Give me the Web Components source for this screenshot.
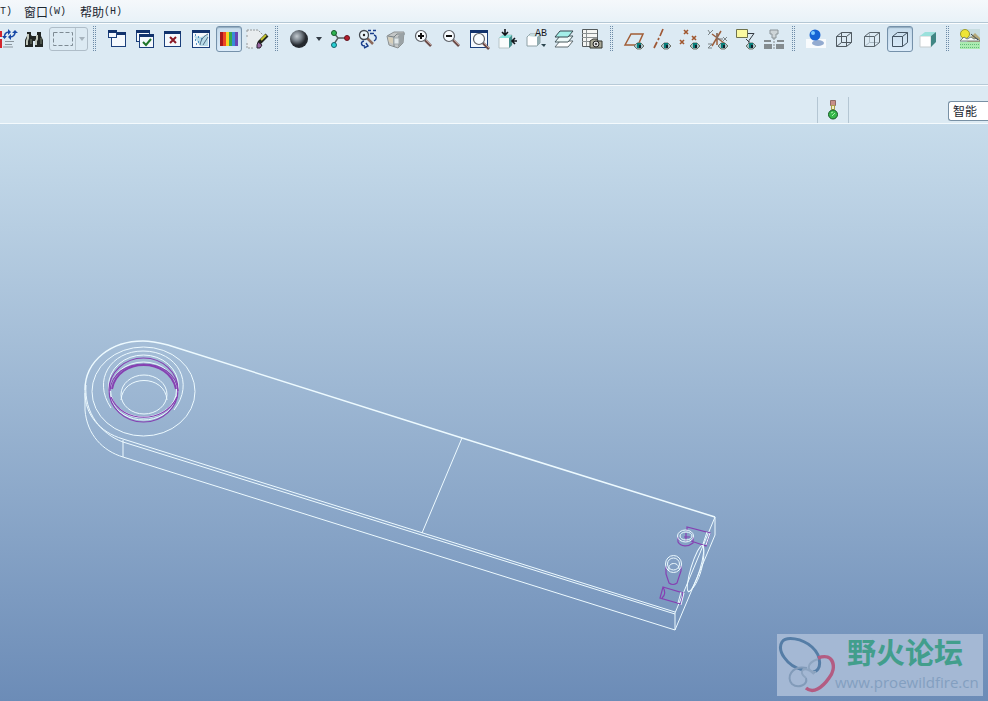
<!DOCTYPE html>
<html lang="zh-CN">
<head>
<meta charset="utf-8">
<title>零件窗口</title>
<style>
html,body{height:100%;margin:0}
body{font:12px/16px "Liberation Sans","Noto Sans CJK SC",sans-serif;color:#1c2731;overflow:hidden}
</style>
</head>
<body>
<cad-app>
  <cad-menubar slot="menu">
    <menu-item key="T" partial></menu-item>
    <menu-item key="W">窗口</menu-item>
    <menu-item key="H">帮助</menu-item>
  </cad-menubar>
  <cad-toolbar slot="tools">
    <tool-button icon="regen" label="再生" narrow></tool-button>
    <tool-button icon="find" label="查找"></tool-button>
    <select-mode></select-mode>
    <tool-grip></tool-grip>
    <tool-button icon="newwin" label="新建窗口"></tool-button>
    <tool-button icon="activate" label="激活窗口"></tool-button>
    <tool-button icon="closewin" label="关闭窗口"></tool-button>
    <tool-button icon="editwin" label="编辑窗口"></tool-button>
    <tool-button icon="spectrum" label="颜色" pressed></tool-button>
    <tool-button icon="repaint" label="重画"></tool-button>
    <tool-grip></tool-grip>
    <tool-button icon="sphere" label="外观库"></tool-button>
    <tool-button icon="arrow" label="外观菜单" menu></tool-button>
    <tool-button icon="spin" label="旋转中心"></tool-button>
    <tool-button icon="orient" label="定向模式"></tool-button>
    <tool-button icon="shade" label="视图管理"></tool-button>
    <tool-button icon="zoomin" label="放大"></tool-button>
    <tool-button icon="zoomout" label="缩小"></tool-button>
    <tool-button icon="refit" label="重新调整"></tool-button>
    <tool-button icon="reorient" label="重定向"></tool-button>
    <tool-button icon="saved" label="已保存视图"></tool-button>
    <tool-button icon="layers" label="图层"></tool-button>
    <tool-button icon="viewmgr" label="视图管理器"></tool-button>
    <tool-grip></tool-grip>
    <tool-button icon="plane" label="基准平面"></tool-button>
    <tool-button icon="axis" label="基准轴"></tool-button>
    <tool-button icon="points" label="基准点"></tool-button>
    <tool-button icon="csys" label="坐标系"></tool-button>
    <tool-button icon="note" label="注释"></tool-button>
    <tool-button icon="fastener" label="紧固件"></tool-button>
    <tool-grip></tool-grip>
    <tool-button icon="ball" label="真实感"></tool-button>
    <tool-button icon="wire" label="线框"></tool-button>
    <tool-button icon="hidden" label="隐藏线"></tool-button>
    <tool-button icon="nohidden" label="消隐" pressed></tool-button>
    <tool-button icon="shaded" label="着色"></tool-button>
    <tool-grip></tool-grip>
    <tool-button icon="scene" label="场景"></tool-button>
  </cad-toolbar>
  <cad-filterbar slot="filter"></cad-filterbar>
  <cad-viewport slot="view">
    <site-badge>
      <span slot="name">野火论坛</span>
      <a slot="url" href="#">www.proewildfire.cn</a>
    </site-badge>
  </cad-viewport>
</cad-app>

<script>
const eye = (x, y) => `<g transform="translate(${x} ${y})"><path d="M-5 0L-2 -3H2L5 0L2 3H-2Z" fill="#a9c3c6" stroke="#6f746b"/><rect x="-2" y="-3" width="4" height="5" fill="#087c78"/><rect x="0" y="-1" width="2" height="3" fill="#10202c"/></g>`;
const win = (x, y, w, h) => `<rect x="${x + .5}" y="${y + .5}" width="${w - 1}" height="${h - 1}" fill="#f5f9fd" stroke="#1b3f7b"/><rect x="${x}" y="${y}" width="${w}" height="3" fill="#12336d"/>`;
const glass = (x, y, mark) => `<path d="M${x + 4} ${y + 4}L${x + 10} ${y + 10}" stroke="#6a4c48" stroke-width="2.600"/><path d="M${x + 5} ${y + 4}L${x + 10} ${y + 9}" stroke="#c29c94"/><circle cx="${x}" cy="${y}" r="5.5" fill="#f8fcff" stroke="#5b5f65" stroke-width="1.2"/>${mark}`;
const cross = (x, y) => `<path d="M${x - 2} ${y - 2}L${x + 2} ${y + 2}M${x + 2} ${y - 2}L${x - 2} ${y + 2}" stroke="#a0562d" stroke-width="1.6"/>`;

const ICONS = {
  regen: `<path d="M0 2h2v6H0zM0 10h2v9H0z" fill="#d2242b"/><path d="M4.500 9C4 5 6 3 9 3M15 2C15.500 6 13 8 10 8" fill="none" stroke="#1748a5" stroke-width="1.500"/><path d="M2 7h5l-2.500 3zM8 0l3 3-3 3zM12 4h6L15 1zM11 5v6L8 8z" fill="#1748a5"/><path d="M5 12.500h9M5 15.500h7M3 18h10" stroke="#8b969e"/>`,
  find: `<path d="M3 3h4v3l2 2v10H1v-7l2-4zM13 3h4v4l2 4v7h-8V8l2-2zM8 7h4v5H8z" fill="#222725"/><path d="M4 5v4L3 12v4M13 6v4l-1 2v4" stroke="#c2c8bd" stroke-width="2" fill="none"/><path d="M7 10v5M17 9v6" stroke="#77816f"/>`,
  newwin: win(4, 3, 15, 15) + win(1, 1, 9, 8),
  activate: win(1, 1, 14, 12) + win(4, 5, 15, 14) + `<path d="M8 13l3 3 5-6" stroke="#207629" stroke-width="2" fill="none"/>`,
  closewin: win(1, 2, 17, 16) + `<path d="M7 8l6 6M13 8l-6 6" stroke="#8b1925" stroke-width="2"/>`,
  editwin: win(1, 1, 18, 18) + `<path d="M3 7l7 1 7-3v12H9z" fill="#b9dbe8"/><path d="M4 6h1M7 8h1M10 10h1M4 11h1M7 13h1M5 15h1" stroke="#2876b2" stroke-width="1.500"/><path d="M9 16c1-6 4-9 8-11M12 16l5-8" stroke="#547087" fill="none"/>`,
  spectrum: `<path d="M1 3h4v14H1z" fill="#a9161c"/><path d="M4 3h3v14H4z" fill="#ee4524"/><path d="M7 3h3v14H7z" fill="#f6d323"/><path d="M10 3h3v14h-3z" fill="#35a94c"/><path d="M13 3h3v14h-3z" fill="#398bd8"/><path d="M16 3h3v14h-3z" fill="#6847b2"/>`,
  repaint: `<path d="M0 1h11l6 5-10 13H0z" fill="#e9edef"/><path d="M0 1h11l5 5M0 1v3M0 6v3M0 14v5h6" fill="none" stroke="#969a9b" stroke-dasharray="2 1"/><path d="M12 14l8-8" stroke="#20241b" stroke-width="4"/><path d="M14 11l5-5" stroke="#c4c62f" stroke-width="2"/><path d="M11 13l4 3-2 3h-3v-3z" fill="#9c65a2" stroke="#29232e"/>`,
  sphere: `<defs><radialGradient id="g" cx=".38" cy=".35"><stop stop-color="#c3cad0"/><stop offset=".5" stop-color="#7b848c"/><stop offset="1" stop-color="#25292e"/></radialGradient></defs><circle cx="10" cy="10" r="9" fill="url(#g)"/>`,
  arrow: `<path d="M3 8h6l-3 4z" fill="#333c45"/>`,
  spin: `<path d="M4 4l4 5-4 6M8 9h8" stroke="#555c5d" stroke-width="1.400" fill="none"/><circle cx="4" cy="4" r="2.500" fill="#30b451" stroke="#17592a"/><circle cx="17" cy="9" r="2.500" fill="#b51e2b" stroke="#641620"/><circle cx="4" cy="16" r="2.500" fill="#29d0d4" stroke="#15636c"/>`,
  orient: `<path d="M10 1.500h3M15 1.500h3M12 4.500h4M16 6c3 1 3 4 0 6M6 12c-4 1-3 5 1 5M6 19l4-2-2-3" stroke="#183d8b" stroke-width="1.400" fill="none"/><path d="M9 9l6 6" stroke="#8c6a5c" stroke-width="2.500"/><circle cx="6" cy="6" r="4.500" fill="#eaf5fa" stroke="#444b52" stroke-width="1.300"/><circle cx="6" cy="6" r="1.200" fill="#222"/>`,
  shade: `<path d="M1 7l7-4h10l-1 11-5 5-9-3z" fill="#c4c7c7" stroke="#8c9192"/><path d="M2 7l6 1 3-3h8M8 8v10" stroke="#798285" fill="none"/><path d="M12 7l6-4-1 11-5 4z" fill="#9aa2a5"/><path d="M2 8l5 1v6l-4-2z" fill="#d7cfb9"/><path d="M8 9h5v6H8z" fill="#e1e8ea" stroke="#a2abae"/>`,
  zoomin: glass(7, 7, `<path d="M4 7h6M7 4v6" stroke="#111" stroke-width="2"/>`),
  zoomout: glass(7, 7, `<path d="M4 7h6" stroke="#111" stroke-width="2"/>`),
  refit: win(0, 1, 18, 18) + glass(9, 10, ''),
  reorient: `<path d="M1 9l4-3h9v10l-3 3H1z" fill="#f9fcfc" stroke="#b7c5c8"/><path d="M1 9l4-3h9l-3 3z" fill="#87e5dd"/><path d="M11 9l3-3v10l-3 3z" fill="#438f8d"/><path d="M7 0v6M4 3l3 3 3-3M19 12h-5M17 9l-3 3 3 3" stroke="#10151a" stroke-width="1.600" fill="none"/>`,
  saved: `<path d="M1 8l3-3h10v9l-3 3H1z" fill="#fff" stroke="#8ea0a5"/><path d="M2 7l3-2h8l-3 3z" fill="#c5dcdf"/><path d="M11 8l3-3v9l-3 3z" fill="#93aeb2"/><text x="9" y="7" font-family="Liberation Mono,monospace" font-size="10" fill="#15191d">AB</text><path d="M15 15h5l-2 3z" fill="#2e4650"/>`,
  layers: `<path d="M1 18l5-6h13l-5 6z" fill="#fff" stroke="#606c70"/><path d="M1 13l5-6h13l-5 6z" fill="#eef9f8" stroke="#46595d"/><path d="M1 8l5-6h13l-5 6z" fill="#a4efe8" stroke="#36484f"/>`,
  viewmgr: `<path d="M.5.500h15v17H.500z" fill="#f5f6f3" stroke="#555b5c"/><path d="M0 4.500h15M0 8.500h15M0 12.500h15M4.500 1v16" stroke="#8a9091"/><path d="M8 12l3-2h4l1 2h4v7H8z" fill="#aaa998" stroke="#33342f"/><circle cx="14" cy="15" r="3" fill="#ddd" stroke="#222"/><circle cx="14" cy="15" r="1" fill="#222"/>`,
  plane: `<path d="M1 16L7 5h12l-5 11z" stroke="#a15d36" stroke-width="1.500" fill="none"/>` + eye(15, 17),
  axis: `<path d="M2 19l3-6M6 11l1-2M8 7l3-7" stroke="#9f5835" stroke-width="1.700"/>` + eye(14, 17),
  points: cross(6, 3) + cross(14, 9) + cross(2, 13) + eye(15, 17),
  csys: `<path d="M4 17L13 2M4 5l12 9M9 4v12" stroke="#9b603f" stroke-width="1.500"/><path d="M9 9v-5M9 10h6" stroke="#777"/><path d="M0 1l2 3 3-3M2 4L0 6M15 8l4 4M19 8l-4 4M0 15h4l-4 4h4" stroke="#7c8588" fill="none"/>` + eye(15, 17),
  note: `<path d="M.5.500h11v8H.500z" fill="#fbf9a1" stroke="#6f724c"/><path d="M12 4.500h6l-5 7v3M10 10l3 3" stroke="#343b42" fill="none"/>` + eye(15, 17),
  fastener: `<path d="M6 1h8v4h-2v4H8V5H6z" fill="#ced5d8" stroke="#8b9498"/><path d="M0 11h7v2H0zM13 11h7v2h-7zM0 15h8v5H0zM12 15h8v5h-8z" fill="#858c8f"/><path d="M10 9v11" stroke="#858c8f" stroke-dasharray="2 1"/>`,
  ball: `<path d="M0 10h20v9H0z" fill="#f8fbfd"/><ellipse cx="12" cy="14" rx="6" ry="3" fill="#93abd0"/><circle cx="9" cy="6" r="5.500" fill="#1764d4"/><circle cx="7" cy="4" r="2" fill="#7dcaff"/>`,
  wire: `<path d="M2.500 7.500h10v10h-10zM7.500 3.500h10v10h-10zM2.500 7.500l5-4M12.500 7.500l5-4M2.500 17.500l5-4M12.500 17.500l5-4" fill="none" stroke="#505a61"/>`,
  hidden: `<path d="M7.500 3.500v10h10M2.500 17.500l5-4" fill="none" stroke="#a9b8c2"/><path d="M2.500 7.500h10v10h-10zM2.500 7.500l5-4h10v10l-5 4M12.500 7.500l5-4" fill="none" stroke="#59646b"/>`,
  nohidden: `<path d="M2.500 7.500h10v10h-10zM2.500 7.500l5-4h10v10l-5 4M12.500 7.500l5-4" fill="none" stroke="#425261"/>`,
  shaded: `<path d="M2 7h11v11H2z" fill="#fff" stroke="#c5cdd0"/><path d="M2 7l5-4h11l-5 4z" fill="#9be1dc"/><path d="M13 7l5-4v10l-5 5z" fill="#408684"/>`,
  scene: `<path d="M0 0h20v20H0z" fill="#c7dcdf"/><circle cx="5" cy="5" r="4.500" fill="#eee537" stroke="#9e9c2d"/><path d="M10 9l5-5 5 5v4H7z" fill="#b5a979"/><path d="M0 12l4-4 3 2 4-2 3 2 3-1 3 3z" fill="#f7faf7" stroke="#798581"/><path d="M11 5l7 6" stroke="#3e4748"/><path d="M0 13h20v7H0z" fill="#acebb1"/><path d="M0 15.500h20M0 18.500h20" stroke="#62bd78" stroke-dasharray="1 1"/>`
};

function define(name, html, setup) {
  const template = document.createElement('template');
  template.innerHTML = html;
  customElements.define(name, class extends HTMLElement {
    constructor() {
      super();
      this.attachShadow({ mode: 'open' }).append(template.content.cloneNode(true));
    }
    connectedCallback() { if (setup) setup(this, this.shadowRoot); }
  });
}

define('cad-app', `<style>
:host{display:grid;grid-template-rows:auto auto auto minmax(0,1fr);height:100vh;background:#dceaf3}
</style><slot name="menu"></slot><slot name="tools"></slot><slot name="filter"></slot><slot name="view"></slot>`);

define('cad-menubar', `<style>
:host{display:block;background:linear-gradient(#f5f8fb,#e8f2f8);border-bottom:1px solid #b4c7d4}
nav{display:flex;gap:12px;padding:4px 0 2px}
</style><nav><slot></slot></nav>`);

define('menu-item', `<style>
:host{display:block;padding-right:2px}
:host([partial]){padding-right:0}
button{display:flex;flex:none;align-items:center;height:16px;border:0;padding:0;background:none;font:12px/16px "Noto Sans CJK SC",sans-serif;color:#1c2731}
span{font:10px/16px "Liberation Mono",monospace}
</style><button type="button"><slot></slot><span></span></button>`, (el, root) => {
  root.querySelector('span').textContent = (el.hasAttribute('partial') ? '' : '(') + el.getAttribute('key') + ')';
});

define('cad-toolbar', `<style>
:host{display:block;border-top:1px solid #fbfdfe;border-bottom:1px solid #b7cad7;background:#dceaf3}
div{display:flex;align-items:center;padding:1px 0 31px;min-width:max-content}
</style><div role="toolbar" aria-label="工具栏"><slot></slot></div>`);

define('tool-grip', `<style>
:host{display:block;flex:none;width:14px;height:28px;box-sizing:border-box;padding:1px 6px 1px 4px}
i{display:block;height:26px;background:conic-gradient(from 270deg at 1px 1px,#6d8ba7 90deg,transparent 0) 0 0/2px 2px}
</style><i></i>`);

define('tool-button', `<style>
:host{display:block;flex:none;width:28px}
:host([narrow]){width:20px}
:host([menu]){width:13px}
button{display:flex;align-items:center;justify-content:center;width:26px;height:26px;margin:1px;padding:0;border:1px solid transparent;border-radius:3px;background:none}
:host([pressed]) button{border-color:#7591aa;background:linear-gradient(#c4daeb,#dcecfa);box-shadow:inset 0 1px 1px #91a9bd}
:host([narrow]) button{width:20px;margin:1px 0;border:0;justify-content:start}
:host([menu]) button{width:13px;margin:1px 0;border:0;justify-content:start}
svg{display:block;flex:none;width:20px;height:20px;overflow:visible}
</style><button type="button"></button>`, (el, root) => {
  const b = root.querySelector('button');
  b.setAttribute('aria-label', el.getAttribute('label'));
  if (el.hasAttribute('pressed')) b.setAttribute('aria-pressed', 'true');
  b.innerHTML = `<svg viewBox="0 0 20 20" aria-hidden="true">${ICONS[el.getAttribute('icon')]}</svg>`;
});

define('select-mode', `<style>
:host{display:flex;flex:none;width:39px;height:24px;box-sizing:border-box;margin:1px;border:1px solid #afbdc8;border-radius:3px}
button{display:flex;align-items:center;justify-content:center;border:0;padding:0;background:none}
.box{flex:1}.more{width:12px;border-left:1px solid #b9c7d0}
</style><button class="box" type="button" aria-label="选取框" disabled><svg width="20" height="14"><path d="M.5.500h19v13H.500z" fill="none" stroke="#7d8a93" stroke-dasharray="4 2"/></svg></button><button class="more" type="button" aria-label="选取方式" disabled><svg width="6" height="4"><path d="M0 0h6L3 4z" fill="#a6b3bd"/></svg></button>`);

define('cad-filterbar', `<style>
:host{display:flex;justify-content:flex-end;align-items:flex-end;height:39px;box-sizing:border-box;border-top:1px solid #f9fcfe;border-bottom:1px solid #f4fafd;background:#dceaf3}
.status{display:flex;justify-content:center;align-items:center;width:30px;height:26px;border-left:1px solid #b4c6d3;border-right:1px solid #b4c6d3;margin-right:99px}
select{appearance:none;width:40px;height:20px;margin:0 0 2px;padding:0 0 0 4px;border:1px solid #7890a4;border-right:0;border-radius:3px 0 0 3px;background:#fff;color:#1c2731;font:12px/18px "Noto Sans CJK SC",sans-serif}
</style><div class="status"><svg width="10" height="20" viewBox="0 0 10 20" role="img" aria-label="再生状态"><path d="M2.500.500h5v5h-5z" fill="#c88f87" stroke="#906a65"/><path d="M3.500 5.500h3v4h-3z" fill="#f3eec2" stroke="#aaa147"/><circle cx="5" cy="14.500" r="4.500" fill="#36b84b" stroke="#155624"/><path d="M3 13l2-1M4 16l3-3" stroke="#a6efaa"/></svg></div><select aria-label="过滤器"><option>智能</option></select>`);

define('cad-viewport', `<style>
:host{display:block;position:relative;min-height:0;overflow:hidden;background:linear-gradient(#c7dceb,#6c8cb7)}
.model{display:block;width:100%;height:100%}
.w{fill:none;stroke:#edfaff;stroke-width:1}
.b{fill:none;stroke:#edfaff;stroke-width:1.500}
.p{fill:none;stroke:#8640b2;stroke-width:1.200}
::slotted(site-badge){position:absolute;right:5px;bottom:5px}
</style>
<svg class="model" viewBox="0 124 988 577" preserveAspectRatio="xMinYMin slice" role="img" aria-label="连杆零件线框">
<g class="w">
<path d="M85 393C85 414 99 432 123 439L675 612"/>
<path d="M86 385C84 413 101 434 123 442L675 614"/>
<path d="M85 390V410C87 435 103 451 123 457V440M123 457L675 630V613L715 517V535L675 630"/>
<path d="M462 438L422 533"/>
<ellipse cx="143.500" cy="391.500" rx="51.500" ry="44.500"/>
<path d="M111 408C92 380 111 351 143 351C178 351 195 383 174 410"/>
<ellipse cx="144" cy="394.500" rx="23" ry="19.500"/>
<path d="M121 400C123 374 165 374 167 400"/>
<ellipse cx="143.500" cy="386" rx="35" ry="31"/>
<ellipse cx="143.500" cy="390" rx="33" ry="28"/>
<path d="M111 399C121 427 166 427 176 399"/>
</g>
<path class="b" d="M85 390C85 360 112 341 143 341C152 341 160 343 168 345L462 438L715 517"/>
<g class="p">
<ellipse cx="143.500" cy="390" rx="34.500" ry="32"/>
<path d="M110 391C112 355 175 355 178 391M111 397C122 424 165 424 177 397"/>
<path d="M112 389C118 357 169 357 176 389" stroke-width="2"/>
<path d="M678 537V542C681 547 688 547 693 543V537M687 531V527L710 533L706 546L691 541M684 537H690M686 533V541"/>
<path d="M666 566V574L669 583Q673 586 677 583L681 571V566M663 587L683 593L681 604L660 598ZM663 587Q667 594 662 598"/>
</g>
<g class="w">
<ellipse cx="685.500" cy="536" rx="8" ry="6"/><ellipse cx="686" cy="536" rx="6" ry="4"/>
<ellipse cx="673.500" cy="564" rx="8" ry="8.500"/><ellipse cx="673.500" cy="564" rx="6" ry="6"/><path d="M669 570C667 562 679 561 679 569"/>
<path d="M710 533L706 545M707 532L703 544M684 593L681 605M681 592L678 603"/>
<ellipse cx="695.500" cy="568.500" rx="4.500" ry="24" transform="rotate(17 695.500 568.500)"/>
<path d="M703 545C707 562 696 590 688 592"/>
</g>
</svg><slot></slot>`);

define('site-badge', `<style>
:host{display:flex;align-items:center;box-sizing:border-box;width:206px;height:62px;background:#a4b8d4}
svg{display:block;flex:none;width:58px;height:62px}
.text{display:flex;flex-direction:column;align-items:flex-start;flex:1;min-width:0}
::slotted(span){font:bold 29px/34px "Liberation Sans","Noto Sans CJK SC",sans-serif;color:#429e8c;margin-left:12px}
::slotted(a){font:15px/22px "Open Sans",sans-serif;color:#839fc0;text-decoration:none}
</style>
<svg viewBox="0 0 58 62" aria-hidden="true"><g fill="none">
<path d="M36 38C45 37 45 22 35 13C25 4 9 2 5 8C0 16 9 32 26 36" stroke="#557da6" stroke-width="3"/>
<path d="M30 34C14 31 9 44 15 50C21 55 31 51 29 44" stroke="#829bb9" stroke-width="2"/>
<path d="M41 24C57 18 60 34 52 44C45 54 36 60 29 54" stroke="#b35c82" stroke-width="3.500"/>
<path d="M37 40C27 30 20 38 29 44M41 25C29 29 29 38 39 38" stroke="#8da4c0" stroke-width="2"/></g></svg>
<div class="text"><slot name="name"></slot><slot name="url"></slot></div>`);
</script>
</body>
</html>
